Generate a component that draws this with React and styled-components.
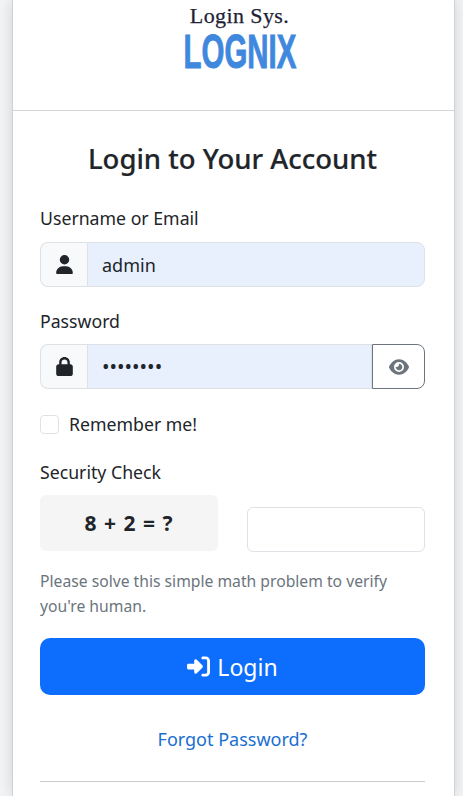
import React from 'react';
import styled, { createGlobalStyle } from 'styled-components';
import { FaUser, FaLock, FaEye, FaRightToBracket } from 'react-icons/fa6';

const GlobalStyle = createGlobalStyle`
  html, body {
    margin: 0;
    height: 100%;
    overflow: hidden;
    background: #f3f4f6;
    font-family: "Noto Sans", "Open Sans", sans-serif;
    color: #212529;
  }
`;

const Card = styled.div`
  box-sizing: border-box;
  width: 443px;
  height: 796px;
  margin-left: 12px;
  background: #fff;
  border-left: 1px solid #cfd2d6;
  border-right: 1px solid #cfd2d6;
  box-shadow: 0 0 14px rgba(0, 0, 0, 0.14);
  overflow: hidden;
`;

const Header = styled.div`
  height: 111px;
  box-sizing: border-box;
  border-bottom: 1px solid #d4d6d9;
  display: flex;
  flex-direction: column;
  align-items: center;
  padding: 4px 0 0 12px;
`;

const Tagline = styled.div`
  font-family: "Liberation Serif", serif;
  font-size: 22px;
  line-height: 24px;
  color: #1e2235;
  letter-spacing: 0.4px;
  -webkit-text-stroke: 0.25px #1e2235;
`;

const Logo = styled.div`
  margin-top: 2px;
  font-family: "Liberation Sans", sans-serif;
  font-weight: 700;
  font-size: 49px;
  line-height: 42px;
  color: #3f88de;
  -webkit-text-stroke: 1px #3f88de;
  transform: scaleX(0.6);
`;

const Body = styled.div`
  padding: 29px 29px 0 27px;
`;

const Title = styled.h1`
  margin: 0 0 28px;
  font-size: 27.5px;
  line-height: 38px;
  font-weight: 500;
  text-align: center;
  -webkit-text-stroke: 0.2px #212529;
`;

const Label = styled.label`
  display: block;
  font-size: 17.7px;
  line-height: 24px;
  margin-bottom: ${(p) => p.$gap}px;
`;

const InputGroup = styled.div`
  display: flex;
  height: 45px;
  margin-bottom: 22px;
`;

const Addon = styled.span`
  box-sizing: border-box;
  width: 47px;
  display: flex;
  align-items: center;
  justify-content: center;
  background: #f8f9fa;
  border: 1px solid #dee2e6;
  border-right: none;
  border-radius: 8px 0 0 8px;
  font-size: 19px;
  color: #212529;
`;

const Field = styled.input`
  flex: 1;
  min-width: 0;
  box-sizing: border-box;
  padding: 0 14px;
  background: #e8f0fe;
  border: 1px solid #dee2e6;
  border-radius: ${(p) => (p.$joined ? '0' : '0 8px 8px 0')};
  font-family: inherit;
  font-size: ${(p) => (p.$joined ? '20px' : '18px')};
  color: #212529;
  outline: none;
`;

const EyeButton = styled.button`
  box-sizing: border-box;
  width: 53px;
  display: flex;
  align-items: center;
  justify-content: center;
  background: #fff;
  border: 1px solid #6c757d;
  border-radius: 0 8px 8px 0;
  font-size: 20px;
  color: #6c757d;
  padding: 0;
`;

const CheckRow = styled.div`
  display: flex;
  align-items: center;
  gap: 10px;
  margin: 23px 0 24px;
  font-size: 17.7px;
  line-height: 24px;
`;

const Box = styled.span`
  box-sizing: border-box;
  width: 19px;
  height: 19px;
  border: 1px solid #dee2e6;
  border-radius: 4px;
  background: #fff;
`;

const CaptchaRow = styled.div`
  display: grid;
  grid-template-columns: 178px 178px;
  column-gap: 29px;
  align-items: end;
`;

const Captcha = styled.div`
  height: 56px;
  margin-bottom: 1px;
  display: flex;
  align-items: center;
  justify-content: center;
  background: #f5f5f5;
  border-radius: 6px;
  font-size: 21px;
  font-weight: 700;
  letter-spacing: 1px;
`;

const AnswerInput = styled.input`
  box-sizing: border-box;
  width: 100%;
  height: 45px;
  border: 1px solid #dee2e6;
  border-radius: 6px;
  background: #fff;
  outline: none;
`;

const Help = styled.p`
  margin: 17px 0 19px;
  font-size: 15.7px;
  line-height: 25px;
  color: #6c757d;
`;

const LoginButton = styled.button`
  width: 100%;
  height: 57px;
  display: flex;
  align-items: center;
  justify-content: center;
  gap: 7px;
  background: #0d6efd;
  border: none;
  border-radius: 10px;
  color: #fff;
  font-family: inherit;
  font-size: 23px;
`;

const Forgot = styled.a`
  display: block;
  margin-top: 32px;
  text-align: center;
  font-size: 18px;
  line-height: 24px;
  color: #1a6fd0;
  text-decoration: none;
`;

const Rule = styled.hr`
  margin: 30px 0 0;
  border: none;
  border-top: 1px solid #c9cbce;
`;

export default function App() {
  return (
    <>
      <GlobalStyle />
      <Card>
        <Header>
          <Tagline>Login Sys.</Tagline>
          <Logo>LOGNIX</Logo>
        </Header>
        <Body>
          <Title>Login to Your Account</Title>
          <Label $gap={12}>Username or Email</Label>
          <InputGroup>
            <Addon><FaUser /></Addon>
            <Field defaultValue="admin" />
          </InputGroup>
          <Label $gap={11}>Password</Label>
          <InputGroup>
            <Addon><FaLock /></Addon>
            <Field $joined type="password" defaultValue="password" />
            <EyeButton type="button"><FaEye /></EyeButton>
          </InputGroup>
          <CheckRow>
            <Box />
            <span>Remember me!</span>
          </CheckRow>
          <Label $gap={11}>Security Check</Label>
          <CaptchaRow>
            <Captcha>8 + 2 = ?</Captcha>
            <AnswerInput />
          </CaptchaRow>
          <Help>Please solve this simple math problem to verify you're human.</Help>
          <LoginButton type="button"><FaRightToBracket /> Login</LoginButton>
          <Forgot href="#">Forgot Password?</Forgot>
          <Rule />
        </Body>
      </Card>
    </>
  );
}
